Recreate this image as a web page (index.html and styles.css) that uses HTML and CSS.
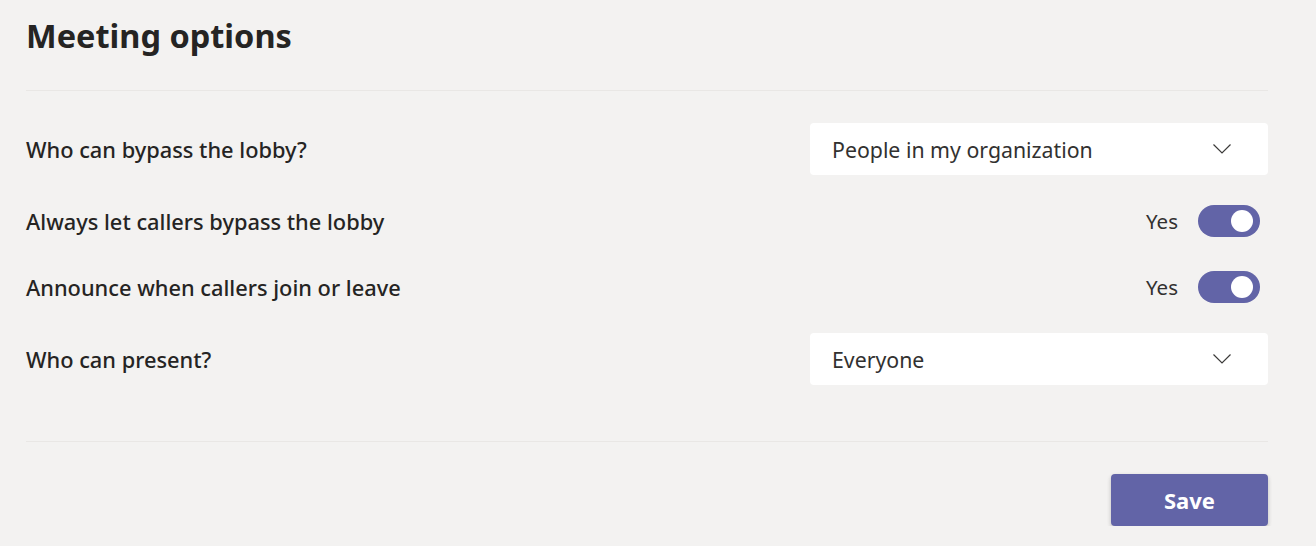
FILE: index.html
```html
<!DOCTYPE html>
<html lang="en">
<head>
<meta charset="utf-8">
<title>Meeting options</title>
<link rel="stylesheet" href="styles.css">
</head>
<body>
<main class="page">
  <h1 class="title">Meeting options</h1>
  <hr class="divider divider-top">
  <section class="options">
    <div class="row row-select">
      <span class="label">Who can bypass the lobby?</span>
      <div class="select">
        <span class="select-value">People in my organization</span>
        <svg class="chevron" width="18" height="10" viewBox="0 0 18 10"><path d="M0.5 0.5 L9 9 L17.5 0.5" fill="none" stroke="#3b3a39" stroke-width="1.2"/></svg>
      </div>
    </div>
    <div class="row row-toggle">
      <span class="label">Always let callers bypass the lobby</span>
      <div class="toggle-group">
        <span class="toggle-text">Yes</span>
        <span class="toggle"><span class="knob"></span></span>
      </div>
    </div>
    <div class="row row-toggle">
      <span class="label">Announce when callers join or leave</span>
      <div class="toggle-group">
        <span class="toggle-text">Yes</span>
        <span class="toggle"><span class="knob"></span></span>
      </div>
    </div>
    <div class="row row-select">
      <span class="label">Who can present?</span>
      <div class="select">
        <span class="select-value">Everyone</span>
        <svg class="chevron" width="18" height="10" viewBox="0 0 18 10"><path d="M0.5 0.5 L9 9 L17.5 0.5" fill="none" stroke="#3b3a39" stroke-width="1.2"/></svg>
      </div>
    </div>
  </section>
  <hr class="divider divider-bottom">
  <div class="actions">
    <button class="save">Save</button>
  </div>
</main>
</body>
</html>
```
FILE: styles.css
```css
html, body {
  margin: 0;
  padding: 0;
  background: #f3f2f1;
}
body {
  font-family: "Noto Sans", "Open Sans", sans-serif;
  color: #252423;
}
.page {
  padding: 0 48px 0 26px;
}
.title {
  margin: 16px 0 0;
  font-size: 32.5px;
  line-height: 40px;
  font-weight: 700;
  color: #252423;
}
.divider {
  border: none;
  height: 1px;
  background: #e9e7e5;
  margin: 0;
}
.divider-top {
  margin-top: 34px;
}
.options {
  display: flex;
  flex-direction: column;
  gap: 26px;
  margin-top: 32px;
}
.row {
  display: flex;
  align-items: center;
  justify-content: space-between;
}
.row-select {
  height: 52px;
}
.row-toggle {
  height: 40px;
}
.label {
  font-size: 21.8px;
  font-weight: 500;
  color: #252423;
}
.select {
  width: 458px;
  height: 52px;
  box-sizing: border-box;
  background: #ffffff;
  border-radius: 4px;
  display: flex;
  align-items: center;
  justify-content: space-between;
  padding: 0 37px 0 22px;
}
.select-value {
  font-size: 21.3px;
  color: #323130;
}
.chevron {
  display: block;
}
.toggle-group {
  display: flex;
  align-items: center;
  gap: 20px;
  margin-right: 8px;
}
.toggle-text {
  font-size: 20.5px;
  color: #323130;
}
.toggle {
  width: 62px;
  height: 32px;
  border-radius: 16px;
  background: #6264a7;
  display: flex;
  align-items: center;
  justify-content: flex-end;
  padding-right: 7px;
  box-sizing: border-box;
}
.knob {
  width: 22px;
  height: 22px;
  border-radius: 50%;
  background: #ffffff;
}
.divider-bottom {
  margin-top: 56px;
}
.actions {
  display: flex;
  justify-content: flex-end;
  margin-top: 32px;
}
.save {
  width: 157px;
  height: 52px;
  border: none;
  border-radius: 4px;
  background: #6264a7;
  color: #ffffff;
  font-family: "Noto Sans", "Open Sans", sans-serif;
  font-size: 22px;
  font-weight: 700;
  box-shadow: 0 2px 4px rgba(0, 0, 0, 0.22);
  padding: 0;
}
```
